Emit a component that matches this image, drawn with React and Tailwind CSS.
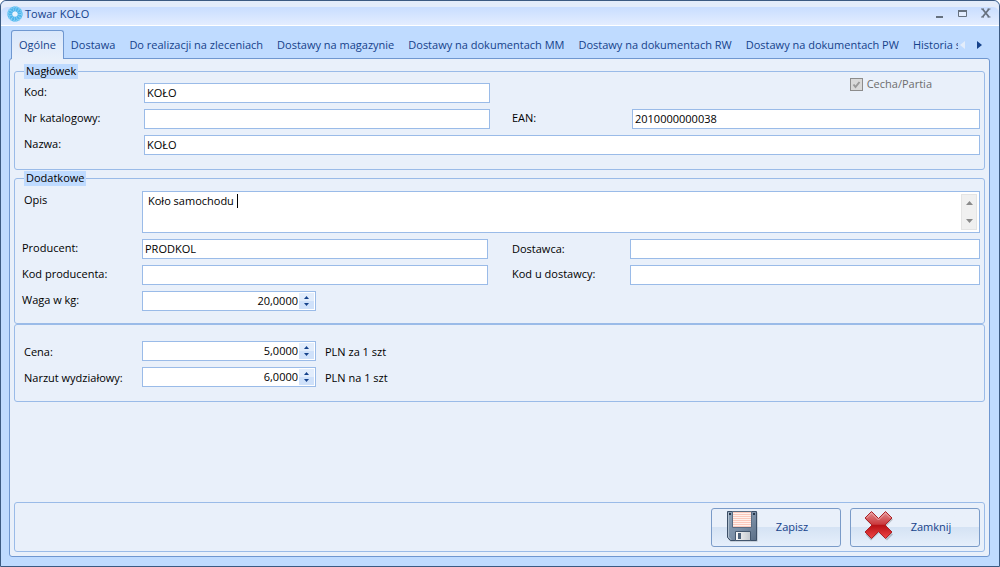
import React, { useState } from 'react';

const tabs = [
    'Ogólne',
    'Dostawa',
    'Do realizacji na zleceniach',
    'Dostawy na magazynie',
    'Dostawy na dokumentach MM',
    'Dostawy na dokumentach RW',
    'Dostawy na dokumentach PW',
    'Historia s',
];

const inputClass = 'h-5 w-full min-w-0 border border-[#9abbe8] bg-white px-[2px] pb-[2px] text-black outline-none';

const AppIcon = () => (
    <svg className="h-4 w-4 shrink-0" viewBox="0 0 16 16" fill="none">
        <circle cx="8" cy="8" r="5" stroke="#4cb4ec" strokeWidth="5" />
        <circle cx="8" cy="8" r="7" stroke="#7fcdf5" strokeWidth="1.6" strokeDasharray="2 0.8" />
        <circle cx="8" cy="8" r="4.6" stroke="#8ed3f5" strokeWidth="3.4" strokeDasharray="0.7 1.7" />
        <circle cx="8" cy="8" r="2.6" fill="#e8f3fd" />
    </svg>
);

const SaveIcon = () => (
    <svg className="mb-[3px] h-8 w-8 shrink-0" viewBox="0 0 32 32">
        <defs>
            <linearGradient id="diskBody" x1="0" y1="0" x2="1" y2="1">
                <stop offset="0" stopColor="#8ba0b6" />
                <stop offset="0.5" stopColor="#7d91a8" />
                <stop offset="1" stopColor="#5a6e86" />
            </linearGradient>
            <linearGradient id="diskShutter" x1="0" y1="0" x2="1" y2="0">
                <stop offset="0" stopColor="#fafafa" />
                <stop offset="1" stopColor="#c3c8ce" />
            </linearGradient>
        </defs>
        <path d="M2.5 2.5h29v29h-27l-2-2z" fill="#000" opacity="0.25" />
        <path d="M1.5 1.5h29v29h-26l-3-3z" fill="url(#diskBody)" stroke="#3d5068" />
        <path d="M2.5 2.5v24.5l2.5 2.5" stroke="#b1c0cf" fill="none" />
        <path d="M6.5 1.5h19v16h-19z" fill="#fff1ec" stroke="#5c6d82" />
        <path d="M7 2.5h18M7 4.5h18M7 6.5h18M7 8.5h18M7 10.5h18M7 12.5h18M7 14.5h18M7 16.5h18" stroke="#fbc9bc" />
        <path d="M3 3h2v2H3zM27 3h2v2h-2z" fill="#26364a" />
        <path d="M9.5 21.5h15v9h-15z" fill="url(#diskShutter)" stroke="#43566d" />
        <path d="M12 23h3v6h-3z" fill="#50647c" />
    </svg>
);

const CloseIcon = () => (
    <svg className="mb-[3px] h-8 w-8 shrink-0" viewBox="2 0 32 32">
        <defs>
            <linearGradient id="crossFill" x1="0" y1="0" x2="0" y2="1">
                <stop offset="0" stopColor="#e29093" />
                <stop offset="0.47" stopColor="#cb3a3d" />
                <stop offset="0.52" stopColor="#b81216" />
                <stop offset="1" stopColor="#f04747" />
            </linearGradient>
        </defs>
        <path d="M8 3.500l8 7.500 8-7.500 6 6-7.500 7.500 7.500 7.500-6 6-8-7.500-8 7.500-5.500-6 7.500-7.500-7.500-7.500z" fill="#000" opacity="0.2" />
        <path
            d="M8.500 1.500l7 7 7-7 6.500 6.500-7 7 7 7-6.500 6.500-7-7-7 7-6.500-6.500 7-7-7-7z"
            fill="url(#crossFill)"
            stroke="#ab2226"
            strokeLinejoin="round"
        />
        <path d="M3.500 8l5-5 7 7 7-7 5 5" stroke="#f0b4b5" strokeWidth="0.8" fill="none" />
    </svg>
);

const Label = ({ htmlFor, className = '', children }) => (
    <label htmlFor={htmlFor} className={`leading-[18px] whitespace-nowrap ${className}`}>{children}</label>
);

const Group = ({ title, className = '', children }) => (
    <fieldset className={`min-w-0 rounded-[3px] border border-[#9abbe8] pr-1 pl-[9px] ${className}`}>
        {title && <legend className="h-[15px] bg-[#bfdbff] px-[2px] leading-[14px]">{title}</legend>}
        {children}
    </fieldset>
);

const Spinner = ({ id, defaultValue }) => (
    <div className="flex h-5 w-[174px] shrink-0 border border-[#9abbe8] bg-white p-px">
        <input id={id} type="text" defaultValue={defaultValue} className="min-w-0 flex-1 bg-transparent text-right outline-none" />
        <div className="ml-px flex w-[15px] flex-col bg-[#cfe1fa]">
            <button type="button" aria-label="Zwiększ" className="flex flex-1 items-end justify-center bg-[#e2edfc] pb-[2px]">
                <svg className="h-[3px] w-[5px]" viewBox="0 0 5 3"><path d="M0 3L2.500 0 5 3z" fill="#15428b" /></svg>
            </button>
            <button type="button" aria-label="Zmniejsz" className="flex flex-1 items-start justify-center pt-[2px]">
                <svg className="h-[3px] w-[5px]" viewBox="0 0 5 3"><path d="M0 0h5L2.500 3z" fill="#15428b" /></svg>
            </button>
        </div>
    </div>
);

const ActionButton = ({ icon, children }) => (
    <button
        type="button"
        className="flex h-[39px] w-[130px] items-center rounded-[3px] border border-[#7a9bc8] bg-linear-to-b from-[#e9f0fa] from-50% via-[#d5e3f4] via-50% to-[#e6effb] pl-[14px] text-[#15428b]"
    >
        {icon}
        <span className="flex-1 pr-[14px]">{children}</span>
    </button>
);

const App = () => {
    const [active, setActive] = useState(0);

    return (
        <div className="flex min-h-screen flex-col rounded-t-md border border-[#3b5a82] bg-[#bfdbff] font-['Open_Sans','Noto_Sans',sans-serif] text-[11px] text-black">
            {/* Title bar */}
            <header className="flex h-[25px] shrink-0 items-center rounded-t-md border-b border-white bg-linear-to-b from-[#c0d8ff] to-[#e3edff] pt-px pr-2 pl-[6px] text-[#15428b] shadow-[inset_0_6px_0_#e3ecfa]">
                <AppIcon />
                <h1 className="ml-[2px] flex-1 pt-[2px]">Towar KOŁO</h1>
                <div className="flex items-center gap-[13px] pb-[2px] text-[#66717f]">
                    <button type="button" aria-label="Minimalizuj">
                        <svg className="h-[10px] w-[10px]" viewBox="0 0 10 10"><path d="M1 8h7v2H1z" fill="currentColor" /></svg>
                    </button>
                    <button type="button" aria-label="Maksymalizuj">
                        <svg className="h-[10px] w-[10px]" viewBox="0 0 10 10"><path d="M.5 2.500h8v6h-8z" fill="#e3edff" stroke="currentColor" /><path d="M0 2h9v2H0z" fill="currentColor" /></svg>
                    </button>
                    <button type="button" aria-label="Zamknij okno">
                        <svg className="h-[10px] w-[10px]" viewBox="0 0 10 10"><path d="M1.500 1l6.500 8M8 1L1.500 9" stroke="currentColor" strokeWidth="1.8" /><path d="M0 1h3M6.500 1h3M0 9h3M6.500 9h3" stroke="currentColor" /></svg>
                    </button>
                </div>
            </header>

            <div className="flex flex-1 flex-col pt-1 pr-[9px] pb-[9px] pl-2">
                {/* Tabs */}
                <div className="z-10 -mb-px flex h-[29px] items-stretch pl-[2px] text-[#15428b]">
                    <div role="tablist" className="flex min-w-0 flex-1 overflow-hidden">
                        {tabs.map((tab, i) => (
                            <button
                                key={tab}
                                type="button"
                                role="tab"
                                aria-selected={active === i}
                                onClick={() => setActive(i)}
                                className={`shrink-0 rounded-t-[3px] border border-b-0 whitespace-nowrap ${active === i
                                    ? 'border-[#6f97d0] bg-linear-to-b from-[#d9e7fb] to-[#e9f0fa] px-[7px]'
                                    : 'border-transparent px-[6px]'
                                    }`}
                            >
                                {tab}
                            </button>
                        ))}
                    </div>
                    <div className="flex shrink-0 items-center gap-3 pr-2 pl-[2px]">
                        <button type="button" aria-label="Poprzednie karty">
                            <svg className="h-2 w-[5px]" viewBox="0 0 5 8"><path d="M5 0v8L0 4z" fill="#e3edfb" /></svg>
                        </button>
                        <button type="button" aria-label="Następne karty">
                            <svg className="h-2 w-[5px]" viewBox="0 0 5 8"><path d="M0 0v8l5-4z" fill="#15428b" /></svg>
                        </button>
                    </div>
                </div>

                <main className="flex flex-1 flex-col rounded-[3px] border border-[#6f97d0] bg-[#e9f0fa] p-1 pt-[5px]">
                    <Group title="Nagłówek" className="pb-[14px]">
                        <div className="grid grid-cols-[120px_346fr_142px_348fr] gap-y-[6px] pt-1">
                            <Label htmlFor="kod">Kod:</Label>
                            <input id="kod" className={inputClass} defaultValue="KOŁO" />
                            <label className="col-span-2 -mt-[9px] flex h-5 items-center justify-end gap-1 pr-12 text-[#6d6d6d]">
                                <span className="grid h-[13px] w-[13px] place-items-center">
                                    <input
                                        type="checkbox"
                                        defaultChecked
                                        disabled
                                        className="col-start-1 row-start-1 h-[13px] w-[13px] appearance-none border border-[#8c8c8c] bg-[#d9d9d9]"
                                    />
                                    <svg className="pointer-events-none col-start-1 row-start-1 h-[9px] w-[9px]" viewBox="0 0 9 9" fill="none">
                                        <path d="M1.500 4.500L3.500 7 7.500 2" stroke="#9a9a9a" strokeWidth="2" />
                                    </svg>
                                </span>
                                Cecha/Partia
                            </label>

                            <Label htmlFor="katalog">Nr katalogowy:</Label>
                            <input id="katalog" className={inputClass} />
                            <Label htmlFor="ean" className="pl-[22px]">EAN:</Label>
                            <input id="ean" className={inputClass} defaultValue="2010000000038" />

                            <Label htmlFor="nazwa">Nazwa:</Label>
                            <input id="nazwa" className={`${inputClass} col-span-3`} defaultValue="KOŁO" />
                        </div>
                    </Group>

                    <Group title="Dodatkowe" className="mt-px pb-3">
                        <div className="-ml-[2px] grid grid-cols-[120px_346fr_142px_350fr] gap-y-[6px] pt-[5px]">
                            <Label htmlFor="opis" className="pl-[2px]">Opis</Label>
                            <div className="relative col-span-3 flex h-[42px] border border-[#9abbe8] bg-white p-[2px]">
                                <textarea
                                    id="opis"
                                    className="min-w-0 flex-1 resize-none overflow-hidden px-[3px] leading-[14px] outline-none"
                                    defaultValue="Koło samochodu "
                                />
                                <span className="absolute top-[2px] left-[94px] h-[14px] w-px bg-black" />
                                <div className="flex w-4 flex-col items-center justify-between border border-[#e4e4e4] bg-[#f0f0f0] py-[6px]">
                                    <button type="button" aria-label="W górę">
                                        <svg className="block h-1 w-[7px]" viewBox="0 0 7 4"><path d="M0 4L3.500 0 7 4z" fill="#8a8a8a" /></svg>
                                    </button>
                                    <button type="button" aria-label="W dół">
                                        <svg className="block h-1 w-[7px]" viewBox="0 0 7 4"><path d="M0 0h7L3.500 4z" fill="#8a8a8a" /></svg>
                                    </button>
                                </div>
                            </div>

                            <Label htmlFor="producent">Producent:</Label>
                            <input id="producent" className={inputClass} defaultValue="PRODKOL" />
                            <Label htmlFor="dostawca" className="pt-px pl-6">Dostawca:</Label>
                            <input id="dostawca" className={inputClass} />

                            <Label htmlFor="kodProducenta">Kod producenta:</Label>
                            <input id="kodProducenta" className={inputClass} />
                            <Label htmlFor="kodDostawcy" className="pl-6">Kod u dostawcy:</Label>
                            <input id="kodDostawcy" className={inputClass} />

                            <Label htmlFor="waga">Waga w kg:</Label>
                            <Spinner id="waga" defaultValue="20,0000" />
                        </div>
                    </Group>

                    <Group className="pt-4 pb-[14px]">
                        <div className="grid grid-cols-[118px_174px_1fr] items-end gap-y-[6px]">
                            <Label htmlFor="cena">Cena:</Label>
                            <Spinner id="cena" defaultValue="5,0000" />
                            <span className="pl-[9px] leading-[18px]">PLN za 1 szt</span>
                            <Label htmlFor="narzut">Narzut wydziałowy:</Label>
                            <Spinner id="narzut" defaultValue="6,0000" />
                            <span className="pl-[9px] leading-[18px]">PLN na 1 szt</span>
                        </div>
                    </Group>

                    <footer className="mt-auto flex justify-end gap-[9px] rounded-[3px] border border-[#9abbe8] pt-[5px] pr-1 pb-1">
                        <ActionButton icon={<SaveIcon />}>Zapisz</ActionButton>
                        <ActionButton icon={<CloseIcon />}>Zamknij</ActionButton>
                    </footer>
                </main>
            </div>
        </div>
    );
};

export default App;
